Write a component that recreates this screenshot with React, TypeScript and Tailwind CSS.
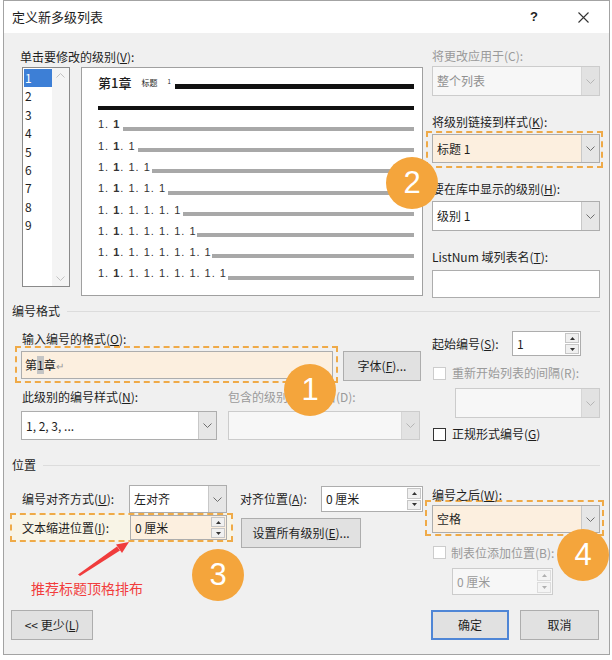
import type { ReactNode } from "react";

function Chevron({ up = false, color = "#707070" }: { up?: boolean; color?: string }) {
  return (
    <svg width="9" height="5" viewBox="0 0 9 5">
      <path
        d={up ? "M0.5 4.5 L4.5 0.5 L8.5 4.5" : "M0.5 0.5 L4.5 4.5 L8.5 0.5"}
        fill="none"
        stroke={color}
        strokeWidth="1"
      />
    </svg>
  );
}

function Combo({
  value,
  className,
  disabled = false,
  peach = false,
}: {
  value?: ReactNode;
  className: string;
  disabled?: boolean;
  peach?: boolean;
}) {
  const box = disabled
    ? "border-[#cccccc] bg-[#f7f7f7] text-[#8f8f8f]"
    : peach
      ? "border-[#adadad] bg-[#fcefdf]"
      : "border-[#adadad] bg-white";
  return (
    <div className={`flex border ${box} ${className}`}>
      <div className="flex flex-1 items-center pl-[4px]">{value}</div>
      <div
        className={`flex w-[18px] items-center justify-center border-l ${
          disabled ? "border-[#d6d6d6] bg-[#e2e2e2]" : "border-[#c8c8c8] bg-[#e6e6e6]"
        }`}
      >
        <Chevron color={disabled ? "#b5b5b5" : "#6e6e6e"} />
      </div>
    </div>
  );
}

function SpinArrow({ up, disabled }: { up: boolean; disabled: boolean }) {
  return (
    <div
      className={`flex flex-1 items-center justify-center border ${
        disabled ? "border-[#dcdcdc] bg-[#f4f4f4]" : "border-[#c6c6c6] bg-[#f0f0f0]"
      }`}
    >
      <svg width="5" height="3" viewBox="0 0 5 3">
        <path
          d={up ? "M0 3 L2.5 0 L5 3Z" : "M0 0 L2.5 3 L5 0Z"}
          fill={disabled ? "#b0b0b0" : "#333333"}
        />
      </svg>
    </div>
  );
}

function Spin({
  value,
  className,
  disabled = false,
  peach = false,
}: {
  value: ReactNode;
  className: string;
  disabled?: boolean;
  peach?: boolean;
}) {
  const box = disabled
    ? "border-[#cccccc] bg-[#f7f7f7] text-[#9a9a9a]"
    : peach
      ? "border-[#adadad] bg-[#fcefdf]"
      : "border-[#adadad] bg-white";
  return (
    <div className={`flex border ${box} ${className}`}>
      <div className="flex flex-1 items-center pl-[4px]">{value}</div>
      <div className="flex w-[15px] flex-col gap-[1px] py-[1px] pr-[1px]">
        <SpinArrow up disabled={disabled} />
        <SpinArrow up={false} disabled={disabled} />
      </div>
    </div>
  );
}

function Button({ children, className }: { children: ReactNode; className: string }) {
  return (
    <div
      className={`flex items-center justify-center border border-[#adadad] bg-[#e1e1e1] ${className}`}
    >
      {children}
    </div>
  );
}

function Checkbox({ disabled = false }: { disabled?: boolean }) {
  return (
    <div
      className={`h-[13px] w-[13px] border bg-white ${
        disabled ? "border-[#cccccc]" : "border-[#333333]"
      }`}
    />
  );
}

function Badge({ n, className }: { n: string; className: string }) {
  return (
    <div
      className={`absolute flex h-[52px] w-[52px] items-center justify-center rounded-full bg-[#f4a53c] font-['Liberation_Sans',sans-serif] text-[31px] text-white ${className}`}
    >
      {n}
    </div>
  );
}

function SectionHeader({ title }: { title: string }) {
  return (
    <div className="ml-[8px] flex h-[16px] items-center leading-[16px]">
      <span>{title}</span>
      <div className="ml-[7px] mr-[9px] h-px flex-1 bg-[#dcdcdc]" />
    </div>
  );
}

const levelRows = [
  { w: "w-[25px]", n: 2 },
  { w: "w-[40px]", n: 3 },
  { w: "w-[54px]", n: 4 },
  { w: "w-[70px]", n: 5 },
  { w: "w-[85px]", n: 6 },
  { w: "w-[99px]", n: 7 },
  { w: "w-[114px]", n: 8 },
  { w: "w-[130px]", n: 9 },
];

function LevelNumber({ n }: { n: number }) {
  return (
    <span className="whitespace-nowrap tracking-[1px]">
      1. <b className="font-bold">1</b>
      {". 1".repeat(n - 2)}
    </span>
  );
}

function Preview() {
  return (
    <div className="ml-[11px] h-[229px] w-[342px] border border-[#a0a0a0] bg-white pl-[16px] pr-[8px] pt-[7px]">
      <div className="flex h-[16px] items-center">
        <span className="text-[13px] font-medium">第1章</span>
        <span className="ml-[10px] text-[8px]">标题</span>
        <span className="-mt-[3px] ml-[10px] text-[6px]">1</span>
        <div className="ml-[4px] mt-[7px] h-[5px] flex-1 bg-[#111111]" />
      </div>
      <div className="mt-[15px] h-[4px] bg-[#111111]" />
      <div className="mt-[4px] font-['Liberation_Sans',sans-serif] text-[11px] text-[#333333]">
        {levelRows.map((row) => (
          <div key={row.n} className="flex h-[21.3px] items-center">
            <div className={`shrink-0 ${row.w}`}>
              <LevelNumber n={row.n} />
            </div>
            <div className="mt-[8px] h-[4px] flex-1 bg-[#a8a8a8]" />
          </div>
        ))}
      </div>
    </div>
  );
}

function LevelList() {
  return (
    <div className="ml-[2px] flex h-[220px] w-[48px] border border-[#8a8a8a] bg-white">
      <div className="w-[29px] pl-[1px] pt-[1px] text-[12px]">
        {["1", "2", "3", "4", "5", "6", "7", "8", "9"].map((lv) => (
          <div
            key={lv}
            className={`h-[18.4px] pl-[1px] leading-[18.4px] ${
              lv === "1" ? "bg-[#3d7fd6] text-white" : ""
            }`}
          >
            {lv}
          </div>
        ))}
      </div>
      <div className="flex flex-1 flex-col items-center justify-between bg-[#f4f4f4] py-[5px]">
        <Chevron up color="#c2c2c2" />
        <Chevron color="#c2c2c2" />
      </div>
    </div>
  );
}

export default function App() {
  return (
    <div className="relative h-[660px] w-[612px] bg-white font-['Noto_Sans_CJK_SC','Noto_Sans',sans-serif] text-[12px] text-[#1e1e1e]">
      <div className="ml-[3px] flex h-[655px] w-[607px] flex-col border border-[#a3a3a3] bg-[#f0f0f0] pt-0">
        <div className="flex h-[32px] items-center bg-white pl-[8px]">
          <span className="text-[13px]">定义新多级列表</span>
          <span className="ml-auto font-['Liberation_Sans',sans-serif] text-[13px] font-bold">?</span>
          <svg className="ml-[40px] mr-[20px]" width="11" height="11" viewBox="0 0 11 11">
            <path d="M0.5 0.5 L10.5 10.5 M10.5 0.5 L0.5 10.5" stroke="#333333" strokeWidth="1.1" />
          </svg>
        </div>

        {/* top: level list, preview, style link */}
        <div className="mt-[16px] flex items-start">
          <div className="ml-[16px]">
            <div className="h-[16px] leading-[16px]">
              单击要修改的级别(<u>V</u>):
            </div>
            <div className="mt-[2px] flex items-start">
              <LevelList />
              <Preview />
            </div>
          </div>
          <div className="-mt-[1px] ml-[9px] w-[168px]">
            <div className="h-[16px] leading-[16px] text-[#9a9a9a]">将更改应用于(C):</div>
            <Combo value="整个列表" disabled className="mt-[2px] h-[30px]" />
            <div className="mt-[18px] h-[16px] leading-[16px]">
              将级别链接到样式(<u>K</u>):
            </div>
            <div className="-ml-[6px] mt-[1px] w-[177px] border-2 border-dashed border-[#efaa48] pb-[3px] pl-[4px] pr-[1px] pt-[1px]">
              <Combo value="标题 1" peach className="h-[29px] w-[168px]" />
            </div>
            <div className="mt-[13px] h-[16px] leading-[16px]">
              要在库中显示的级别(<u>H</u>):
            </div>
            <Combo value="级别 1" className="mt-[4px] h-[30px]" />
            <div className="mt-[18px] h-[16px] leading-[16px]">
              ListNum 域列表名(<u>T</u>):
            </div>
            <div className="mt-[5px] h-[28px] border border-[#adadad] bg-white" />
          </div>
        </div>

        <div className="mt-[5px]">
          <SectionHeader title="编号格式" />
        </div>

        {/* number format */}
        <div className="flex items-start">
          <div className="ml-[11px] w-[417px]">
            <div className="ml-[7px] mt-[13px] h-[14px] leading-[14px]">
              输入编号的格式(<u>O</u>):
            </div>
            <div className="flex items-start">
              <div className="w-[323px] border-2 border-dashed border-[#efaa48] pb-[2px] pl-[4px] pr-[3px] pt-[3px]">
                <div className="flex h-[28px] items-center border border-[#adadad] bg-[#fcefdf] pl-[3px]">
                  <span>第</span>
                  <span className="bg-[#c4c4c4]">1</span>
                  <span>章</span>
                  <span className="text-[10px] text-[#9a9a9a]">↵</span>
                </div>
              </div>
              <Button className="ml-[5px] mt-[5px] h-[30px] w-[78px]">
                字体(<u>F</u>)...
              </Button>
            </div>
            <div className="mt-[6px] flex h-[16px] leading-[16px]">
              <div className="ml-[7px] w-[206px]">
                此级别的编号样式(<u>N</u>):
              </div>
              <div className="text-[#9a9a9a]">包含的级别编号来自(D):</div>
            </div>
            <div className="mt-[6px] flex">
              <Combo value="1, 2, 3, ..." className="ml-[6px] h-[29px] w-[196px]" />
              <Combo disabled className="ml-[11px] h-[29px] w-[192px]" />
            </div>
          </div>
          <div className="w-[168px]">
            <div className="mt-[12px] flex items-center">
              <div className="w-[80px]">
                起始编号(<u>S</u>):
              </div>
              <Spin value="1" className="h-[25px] w-[69px]" />
            </div>
            <div className="mt-[9px] flex h-[16px] items-center">
              <div className="ml-[1px]">
                <Checkbox disabled />
              </div>
              <span className="ml-[6px] text-[#9a9a9a]">重新开始列表的间隔(R):</span>
            </div>
            <Combo disabled className="ml-[23px] mt-[7px] h-[30px] w-[145px]" />
            <div className="mt-[8px] flex h-[16px] items-center">
              <div className="ml-[1px]">
                <Checkbox />
              </div>
              <span className="ml-[6px]">
                正规形式编号(<u>G</u>)
              </span>
            </div>
          </div>
        </div>

        <div className="mt-[15px]">
          <SectionHeader title="位置" />
        </div>

        {/* position */}
        <div className="flex items-start">
          <div className="ml-[6px] w-[415px]">
            <div className="mt-[12px] flex h-[28px] items-center">
              <div className="ml-[12px] w-[107px]">
                编号对齐方式(<u>U</u>):
              </div>
              <Combo value="左对齐" className="h-[28px] w-[98px]" />
              <div className="ml-[13px] w-[81px]">
                对齐位置(<u>A</u>):
              </div>
              <Spin value="0 厘米" className="h-[26px] w-[102px]" />
            </div>
            <div className="flex items-start">
              <div className="flex w-[223px] items-center border-2 border-dashed border-[#efaa48] bg-[#f8f4e6] pl-[10px]">
                <div className="w-[108px]">
                  文本缩进位置(<u>I</u>):
                </div>
                <Spin value="0 厘米" peach className="h-[25px] w-[97px]" />
              </div>
              <Button className="ml-[8px] mt-[5px] h-[30px] w-[120px]">
                设置所有级别(<u>E</u>)...
              </Button>
            </div>
            <div className="ml-[21px] mt-[31px] h-[18px] text-[14px] leading-[18px] text-[#f23d3d]">
              推荐标题顶格排布
            </div>
          </div>
          <div className="w-[179px]">
            <div className="ml-[7px] mt-[15px] h-[14px] leading-[14px]">
              编号之后(<u>W</u>):
            </div>
            <div className="-mt-[2px] border-2 border-dashed border-[#efaa48] pb-[1px] pl-[5px] pr-[2px] pt-[3px]">
              <Combo value="空格" peach className="h-[28px] w-[168px]" />
            </div>
            <div className="ml-[8px] mt-[10px] flex h-[13px] items-center">
              <Checkbox disabled />
              <span className="ml-[5px] text-[#9a9a9a]">制表位添加位置(B):</span>
            </div>
            <Spin value="0 厘米" disabled className="ml-[27px] mt-[9px] h-[27px] w-[101px]" />
          </div>
        </div>

        <div className="mt-[13px] flex h-[30px]">
          <Button className="ml-[7px] h-[30px] w-[82px]">
            {"<< 更少("}
            <u>L</u>)
          </Button>
          <div className="ml-auto flex h-[30px] w-[78px] items-center justify-center border-2 border-[#4f86d6] bg-[#e1e1e1]">
            确定
          </div>
          <Button className="ml-[11px] mr-[10px] h-[30px] w-[79px]">取消</Button>
        </div>
      </div>

      <svg className="absolute left-0 top-0" width="612" height="660" viewBox="0 0 612 660">
        <polygon points="78,574.5 80,576 120,550.5 117,546.5" fill="#f03c3c" />
        <polygon points="129,542 122,553 116,544.5" fill="#f03c3c" />
      </svg>

      <Badge n="1" className="left-[284px] top-[364px]" />
      <Badge n="2" className="left-[386px] top-[157px]" />
      <Badge n="3" className="left-[192px] top-[549px]" />
      <Badge n="4" className="left-[557px] top-[529px]" />
    </div>
  );
}
